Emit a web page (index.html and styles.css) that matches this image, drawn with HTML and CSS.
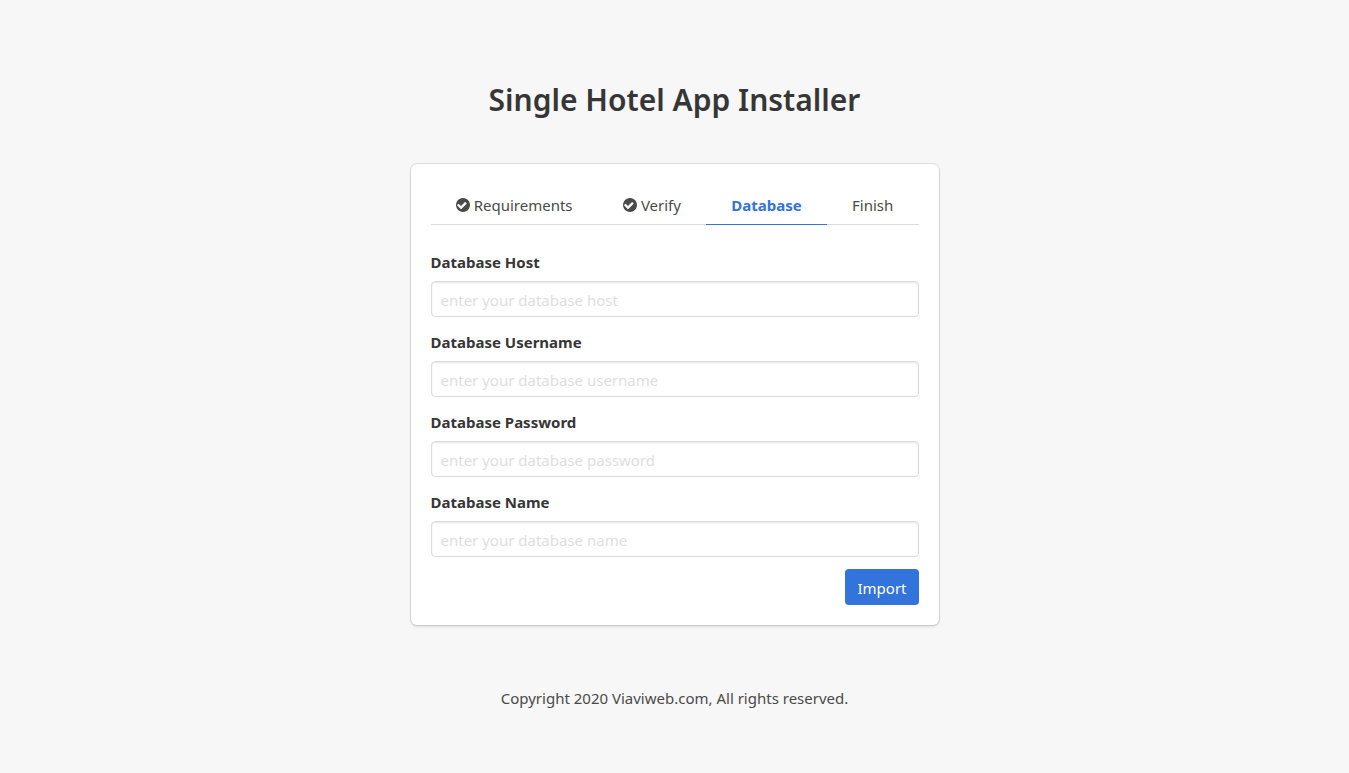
FILE: index.html
```
<!DOCTYPE html>
<html lang="en">
<head>
<meta charset="utf-8">
<meta name="viewport" content="width=device-width, initial-scale=1">
<title>Single Hotel App Installer</title>
<link rel="stylesheet" href="styles.css">
</head>
<body>
<main class="page">
  <h1 class="title">Single Hotel App Installer</h1>
  <section class="box">
    <nav class="tabs">
      <ul class="tab-list">
        <li class="tab"><a href="#"><svg class="check" viewBox="128 128 1536 1536" aria-hidden="true"><path d="M1284 734q0-28-18-46l-91-90q-19-19-45-19t-45 19l-408 407-226-226q-19-19-45-19t-45 19l-91 90q-18 18-18 46 0 27 18 45l362 362q19 19 45 19 27 0 46-19l543-543q18-18 18-45zm380 162q0 209-103 385.500t-279.500 279.500-385.500 103-385.500-103-279.500-279.500-103-385.500 103-385.500 279.500-279.500 385.500-103 385.500 103 279.500 279.500 103 385.500z"/></svg><span>Requirements</span></a></li>
        <li class="tab"><a href="#"><svg class="check" viewBox="128 128 1536 1536" aria-hidden="true"><path d="M1284 734q0-28-18-46l-91-90q-19-19-45-19t-45 19l-408 407-226-226q-19-19-45-19t-45 19l-91 90q-18 18-18 46 0 27 18 45l362 362q19 19 45 19 27 0 46-19l543-543q18-18 18-45zm380 162q0 209-103 385.500t-279.500 279.500-385.500 103-385.500-103-279.500-279.500-103-385.500 103-385.500 279.500-279.500 385.500-103 385.500 103 279.500 279.500 103 385.500z"/></svg><span>Verify</span></a></li>
        <li class="tab tab-active"><a href="#" aria-current="step"><span>Database</span></a></li>
        <li class="tab"><a href="#"><span>Finish</span></a></li>
      </ul>
    </nav>
    <form class="form">
      <div class="field"><label class="label" for="host">Database Host</label><input class="input" id="host" type="text" placeholder="enter your database host"></div>
      <div class="field"><label class="label" for="user">Database Username</label><input class="input" id="user" type="text" placeholder="enter your database username"></div>
      <div class="field"><label class="label" for="pass">Database Password</label><input class="input" id="pass" type="text" placeholder="enter your database password"></div>
      <div class="field"><label class="label" for="name">Database Name</label><input class="input" id="name" type="text" placeholder="enter your database name"></div>
      <div class="actions"><button class="button" type="submit">Import</button></div>
    </form>
  </section>
  <p class="copyright">Copyright 2020 Viaviweb.com, All rights reserved.</p>
</main>
</body>
</html>
```
FILE: styles.css
```
* { box-sizing: border-box; }
body {
  margin: 0;
  background: #f7f7f7;
  color: #4a4a4a;
  font: 15px/24px "Noto Sans", "Open Sans", sans-serif;
}
.page {
  display: flex;
  flex-direction: column;
  align-items: center;
  padding: 80px 16px 60px;
}
.title {
  margin: 0 0 44px;
  color: #363636;
  font-size: 30px;
  line-height: 40px;
  font-weight: 600;
  text-align: center;
}
.box {
  width: 100%;
  max-width: 528px;
  padding: 20px;
  background: #fff;
  border-radius: 6px;
  box-shadow: 0 2px 3px rgba(10, 10, 10, 0.1), 0 0 0 1px rgba(10, 10, 10, 0.1);
}
.tabs { border-bottom: 1px solid #dbdbdb; margin-bottom: 25px; }
.tab-list {
  display: flex;
  list-style: none;
  margin: 0 0 -1px;
  padding: 0;
}
.tab { flex: 1 0 auto; border-bottom: 1px solid transparent; }
.tab a {
  display: flex;
  align-items: center;
  justify-content: center;
  gap: 4px;
  padding: 9px 16px 7px;
  color: inherit;
  text-decoration: none;
}
.tab-active { border-color: #3273dc; color: #3273dc; font-weight: 700; }
.check { width: 14px; height: 14px; fill: currentColor; }
.field { margin-bottom: 12px; }
.field + .field { margin-top: 13px; }
.label {
  display: block;
  margin-bottom: 7px;
  color: #363636;
  font-weight: 700;
}
.input {
  display: block;
  width: 100%;
  height: 36px;
  padding: 6px 9px 4px;
  border: 1px solid #dbdbdb;
  border-radius: 4px;
  background: #fff;
  box-shadow: inset 0 1px 2px rgba(10, 10, 10, 0.1);
  color: #363636;
  font: inherit;
}
.input::placeholder { color: #dedede; opacity: 1; }
.actions { display: flex; justify-content: flex-end; }
.button {
  height: 36px;
  padding: 2px 12px 0;
  border: 0;
  border-radius: 4px;
  background: #3273dc;
  color: #fff;
  font: inherit;
}
.copyright { margin: 61px 0 0; text-align: center; }
```
